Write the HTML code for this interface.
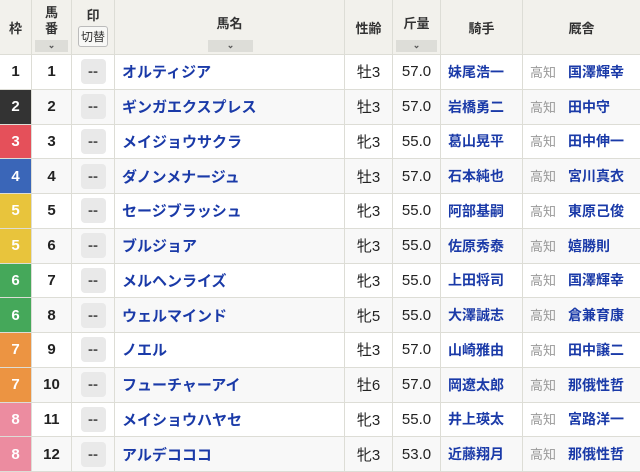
<!DOCTYPE html><html><head><meta charset="utf-8"><style>
body{margin:0;width:640px;height:471px;overflow:hidden;background:#fff;font-family:"Liberation Sans","Noto Sans CJK JP",sans-serif}
table{border-collapse:collapse;table-layout:fixed;width:641px;position:absolute;left:-1px;top:-1px}
td,th{border:1px solid #ddddd6;padding:0;text-align:center;font-size:15px;color:#222}
th{background:#f2f1ec;height:54px;font-size:13px;font-weight:bold;color:#333;vertical-align:middle;position:relative}
tr.r td{height:33.75px}
tr.r:nth-child(odd) td{background:#f8f8f8}
.w{font-weight:bold;font-size:15px}
.n{text-align:left;padding-left:7px;color:#1a3aa8;font-weight:bold;font-size:15px}
.j{text-align:left;padding-left:7px;color:#1a3aa8;font-weight:bold;font-size:14px}
.t{text-align:left;padding-left:7px;font-size:14px}
.t span{color:#999;font-size:13px;margin-right:12px}
.t b{color:#1a3aa8}
.m{display:inline-block;width:25px;height:25px;background:#e9e9e9;border-radius:4px;font-family:"Liberation Sans",sans-serif;font-size:15px;line-height:25px;font-weight:bold;color:#555;vertical-align:middle;letter-spacing:0}
.sort{position:absolute;bottom:2px;height:12px;background:#ddddd8;font-size:9px;line-height:10px;color:#555}
.btn{display:inline-block;border:1px solid #bbb;border-radius:3px;background:#f8f8f6;font-weight:normal;font-size:12px;padding:1px 2px;margin-top:2px}
</style></head><body><table>
<colgroup><col style="width:32px"><col style="width:40px"><col style="width:43px"><col style="width:230px"><col style="width:48px"><col style="width:48px"><col style="width:82px"><col style="width:118px"></colgroup>
<tr><th>枠</th><th><div style="margin-top:-12px;line-height:16px">馬<br>番</div><div class="sort" style="left:3px;right:3px">⌄</div></th><th><div style="margin-top:-2px">印</div><div class="btn">切替</div></th><th><div style="margin-top:-10px">馬名</div><div class="sort" style="left:93px;width:45px">⌄</div></th><th>性齢</th><th><div style="margin-top:-10px">斤量</div><div class="sort" style="left:3px;right:3px">⌄</div></th><th>騎手</th><th>厩舎</th></tr>
<tr class="r"><td class="w">1</td><td class="w">1</td><td><span class="m">--</span></td><td class="n">オルティジア</td><td>牡3</td><td>57.0</td><td class="j">妹尾浩一</td><td class="t"><span>高知</span><b>国澤輝幸</b></td></tr>
<tr class="r"><td class="w" style="background:#333!important;color:#fff">2</td><td class="w">2</td><td><span class="m">--</span></td><td class="n">ギンガエクスプレス</td><td>牡3</td><td>57.0</td><td class="j">岩橋勇二</td><td class="t"><span>高知</span><b>田中守</b></td></tr>
<tr class="r"><td class="w" style="background:#e5505a!important;color:#fff">3</td><td class="w">3</td><td><span class="m">--</span></td><td class="n">メイジョウサクラ</td><td>牝3</td><td>55.0</td><td class="j">葛山晃平</td><td class="t"><span>高知</span><b>田中伸一</b></td></tr>
<tr class="r"><td class="w" style="background:#3a66b8!important;color:#fff">4</td><td class="w">4</td><td><span class="m">--</span></td><td class="n">ダノンメナージュ</td><td>牡3</td><td>57.0</td><td class="j">石本純也</td><td class="t"><span>高知</span><b>宮川真衣</b></td></tr>
<tr class="r"><td class="w" style="background:#e8c43c!important;color:#fff">5</td><td class="w">5</td><td><span class="m">--</span></td><td class="n">セージブラッシュ</td><td>牝3</td><td>55.0</td><td class="j">阿部基嗣</td><td class="t"><span>高知</span><b>東原己俊</b></td></tr>
<tr class="r"><td class="w" style="background:#e8c43c!important;color:#fff">5</td><td class="w">6</td><td><span class="m">--</span></td><td class="n">ブルジョア</td><td>牝3</td><td>55.0</td><td class="j">佐原秀泰</td><td class="t"><span>高知</span><b>嬉勝則</b></td></tr>
<tr class="r"><td class="w" style="background:#45a85a!important;color:#fff">6</td><td class="w">7</td><td><span class="m">--</span></td><td class="n">メルヘンライズ</td><td>牝3</td><td>55.0</td><td class="j">上田将司</td><td class="t"><span>高知</span><b>国澤輝幸</b></td></tr>
<tr class="r"><td class="w" style="background:#45a85a!important;color:#fff">6</td><td class="w">8</td><td><span class="m">--</span></td><td class="n">ウェルマインド</td><td>牝5</td><td>55.0</td><td class="j">大澤誠志</td><td class="t"><span>高知</span><b>倉兼育康</b></td></tr>
<tr class="r"><td class="w" style="background:#ec9442!important;color:#fff">7</td><td class="w">9</td><td><span class="m">--</span></td><td class="n">ノエル</td><td>牡3</td><td>57.0</td><td class="j">山崎雅由</td><td class="t"><span>高知</span><b>田中譲二</b></td></tr>
<tr class="r"><td class="w" style="background:#ec9442!important;color:#fff">7</td><td class="w">10</td><td><span class="m">--</span></td><td class="n">フューチャーアイ</td><td>牡6</td><td>57.0</td><td class="j">岡遼太郎</td><td class="t"><span>高知</span><b>那俄性哲</b></td></tr>
<tr class="r"><td class="w" style="background:#ec8ca0!important;color:#fff">8</td><td class="w">11</td><td><span class="m">--</span></td><td class="n">メイショウハヤセ</td><td>牝3</td><td>55.0</td><td class="j">井上瑛太</td><td class="t"><span>高知</span><b>宮路洋一</b></td></tr>
<tr class="r"><td class="w" style="background:#ec8ca0!important;color:#fff">8</td><td class="w">12</td><td><span class="m">--</span></td><td class="n">アルデコココ</td><td>牝3</td><td>53.0</td><td class="j">近藤翔月</td><td class="t"><span>高知</span><b>那俄性哲</b></td></tr>
</table></body></html>
